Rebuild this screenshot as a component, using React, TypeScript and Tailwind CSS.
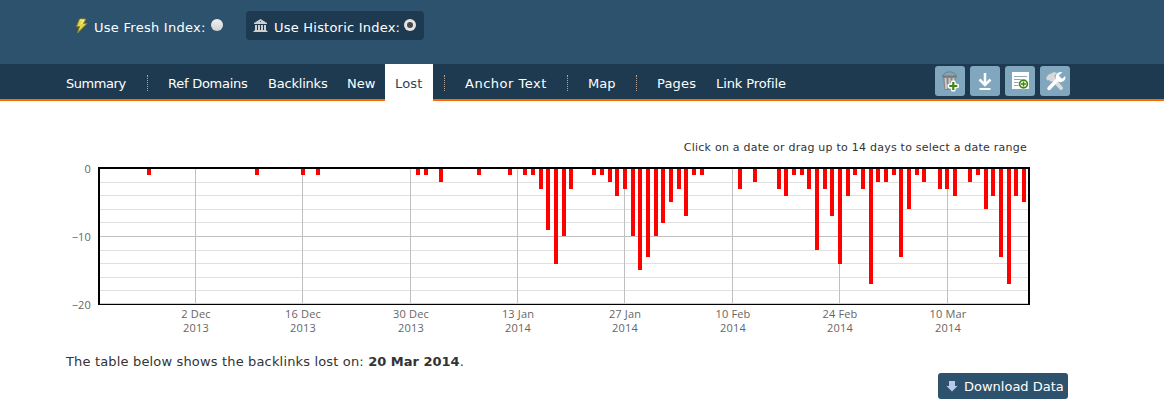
import React from 'react';

interface NavItem {
  label: string;
  className: string;
  active?: boolean;
}

const NAV_GROUPS: NavItem[][] = [
  [{ label: 'Summary', className: 'w-[60px] tracking-[-0.45px]' }],
  [
    { label: 'Ref Domains', className: 'w-[80px] tracking-[-0.25px]' },
    { label: 'Backlinks', className: 'w-[59px] tracking-[-0.2px]' },
    { label: 'New', className: 'w-[28px]' },
    { label: 'Lost', className: 'w-[28px] tracking-[0.2px]', active: true },
  ],
  [{ label: 'Anchor Text', className: 'w-[81px] tracking-[0.5px]' }],
  [{ label: 'Map', className: 'w-[27px]' }],
  [
    { label: 'Pages', className: 'w-[39px] tracking-[0.2px]' },
    { label: 'Link Profile', className: 'w-[70px] tracking-[-0.1px]' },
  ],
];

// [bar left edge, links lost that day]
const LOST: [number, number][] = [
  [147, 1], [255, 1], [301, 1], [316, 1], [416, 1], [424, 1], [439, 2], [477, 1],
  [508, 1], [523, 1], [531, 1], [539, 3], [546, 9], [554, 14], [562, 10], [569, 3],
  [592, 1], [600, 1], [608, 2], [615, 4], [623, 3], [631, 10], [638, 15], [646, 13],
  [654, 10], [661, 8], [669, 5], [677, 3], [684, 7], [692, 1], [700, 1], [738, 3],
  [753, 2], [777, 3], [784, 4], [792, 1], [800, 1], [807, 3], [815, 12], [823, 3],
  [830, 7], [838, 14], [846, 4], [853, 1], [861, 3], [869, 17], [876, 2], [884, 2],
  [892, 1], [899, 13], [907, 6], [915, 1], [922, 2], [938, 3], [945, 3], [953, 4],
  [968, 2], [976, 1], [984, 6], [991, 4], [999, 13], [1007, 17], [1014, 4], [1022, 5],
];

const MINOR_LINES = [182, 195, 209, 222, 250, 263, 277, 290];

const TICKS: [number, string, string][] = [
  [195, '2 Dec', '2013'],
  [302, '16 Dec', '2013'],
  [410, '30 Dec', '2013'],
  [517, '13 Jan', '2014'],
  [624, '27 Jan', '2014'],
  [732, '10 Feb', '2014'],
  [839, '24 Feb', '2014'],
  [947, '10 Mar', '2014'],
];

const barHeight = (value: number) => Math.ceil(168 + 6.8 * value) - 169;

const IndexSwitch: React.FC = () => (
  <div className="h-16 bg-[#2d526d] pl-[66px] pt-[11px] flex items-start gap-[15px] text-white">
    <label className="h-[29px] w-[165px] flex items-center pl-[9px]">
      <svg width="13" height="16" viewBox="0 0 13 16" className="mr-[6px]">
        <path d="M4.500 1h6.500L8.500 5.500H12L2.500 15l2-6.500H1.500z" fill="#e6d44c" stroke="#8d831f" strokeWidth="1" />
        <path d="M5 2h4L6 6" stroke="#fff7b0" fill="none" />
      </svg>
      <span className="w-[112px] whitespace-nowrap mt-[4px] tracking-[0.27px]">Use Fresh Index:</span>
      <span className="ml-[5px] -mt-[2px] size-[12px] shrink-0 rounded-full bg-linear-to-b from-[#f0f0f0] to-[#d2d2d2]" />
    </label>
    <label className="h-[29px] w-[178px] flex items-center rounded bg-[#1e3a50] pl-[7px]">
      <svg width="15" height="15" viewBox="0 0 15 15" className="mr-[6px]" fill="#d0d0d0">
        <path d="M7.500 1L14 5v1H1V5z" />
        <path d="M2 7h2v5H2zM5 7h2v5H5zM8 7h2v5H8zM11 7h2v5h-2zM1.500 12h12v1h-12zM.5 13h14v1H.5z" />
        <path d="M7 3h1v1H7z" fill="#555" />
      </svg>
      <span className="w-[125px] whitespace-nowrap mt-[4px] tracking-[0.22px]">Use Historic Index:</span>
      <span className="ml-[5px] -mt-[2px] size-[12px] shrink-0 rounded-full bg-[#e4e4e4] flex items-center justify-center">
        <span className="size-[6px] rounded-full bg-[#4a4a4a]" />
      </span>
    </label>
  </div>
);

const ToolButton: React.FC<{ children: React.ReactNode }> = ({ children }) => (
  <button className="size-[30px] rounded-[3px] bg-[#80a7bd] flex items-center justify-center">
    <svg width="30" height="30" viewBox="0 0 30 30" fill="none">
      {children}
    </svg>
  </button>
);

const Tools: React.FC = () => (
  <div className="ml-auto mr-[94px] mt-[2px] flex gap-[5px]">
    <ToolButton>
      <path d="M8 10C9 4.500 20 4.500 21 10" stroke="#6e7f88" strokeWidth="1" />
      <path d="M7 9.500h15v2H7z" fill="#7b7b7b" />
      <path d="M8 11h13l-1.500 13h-10z" fill="#858585" />
      <path d="M10.500 12l.7 11M14.500 12v11M18.500 12l-.7 11" stroke="#c9c9c9" strokeWidth="2" />
      <path d="M16.500 14.500h3.500l1 3 3 1v3l-3 1-1 3h-3.500l-1-3-3-1v-3l3-1z" fill="#fff" />
      <path d="M18.300 16v8M14.300 20h8" stroke="#3c8a12" strokeWidth="2.200" />
    </ToolButton>
    <ToolButton>
      <path d="M15 7v12M9.500 13.500l5.500 5.500 5.500-5.500" stroke="#fff" strokeWidth="2.500" />
      <path d="M9.500 22h11v2h-11z" fill="#fff" />
    </ToolButton>
    <ToolButton>
      <path d="M7 6h17v17H7z" fill="#fff" />
      <path d="M9 10.500h13M9 13.500h9M9 16.500h6M9 19.500h5" stroke="#8fabb9" />
      <circle cx="18.500" cy="18" r="5.200" fill="#fff" />
      <circle cx="18.500" cy="18" r="3.900" stroke="#3c8a12" strokeWidth="1.700" />
      <path d="M18.500 15.500v5M16 18h5" stroke="#3c8a12" strokeWidth="1.500" />
    </ToolButton>
    <ToolButton>
      <path d="M12.500 12.500l8.500 9.500" stroke="#dcdcdc" strokeWidth="4" strokeLinecap="round" />
      <path d="M6 12.500l2-3.500 6-3 3 1-2.500 2.500.5 2.500-4 4-2-2-1.500.5z" fill="#d8d8d8" />
      <path d="M9 22.500L19 12" stroke="#fff" strokeWidth="3.500" strokeLinecap="round" />
      <path d="M22.500 6.500a5 5 0 1 0 3 5.500l-.5-2-2.500 2.500-3-.5-.5-3z" fill="#fff" />
    </ToolButton>
  </div>
);

const NavBar: React.FC = () => (
  <nav className="h-[37px] bg-[#ff6a00]">
    <div className="h-[35px] bg-[#1e3a50] flex items-start text-white">
      <div className="ml-[56px] flex">
        {NAV_GROUPS.map((group, i) => (
          <div key={i} className="flex">
            {i > 0 && <span className="ml-[11px] mr-[10px] mt-[11px] h-[16px] w-0 border-l border-dotted border-[#b5a295]" />}
            {group.map((item) => (
              <a
                key={item.label}
                className={
                  item.active
                    ? 'h-[37px] bg-white px-[10px] pt-[10px] text-[#2d4358]'
                    : 'h-[35px] px-[10px] pt-[10px]'
                }
              >
                <span className={`block whitespace-nowrap ${item.className}`}>{item.label}</span>
              </a>
            ))}
          </div>
        ))}
      </div>
      <Tools />
    </div>
  </nav>
);

const LostChart: React.FC = () => (
  <svg
    width="984"
    height="178"
    viewBox="60 160 984 178"
    className="ml-[60px] block font-['Open_Sans','Noto_Sans',sans-serif] text-[11px] tracking-[0.15px]"
    shapeRendering="crispEdges"
  >
    {MINOR_LINES.map((y) => (
      <rect key={y} x="100" y={y} width="928" height="1" fill="#e0e0e0" />
    ))}
    <rect x="100" y="236" width="928" height="1" fill="#c0c0c0" />
    {TICKS.map(([x, day, year]) => (
      <g key={x} fill="#666" textAnchor="middle">
        <rect x={x} y="169" width="1" height="134" fill="#c0c0c0" />
        <text x={x + 1} y="318">{day}</text>
        <text x={x + 1} y="332">{year}</text>
      </g>
    ))}
    {LOST.map(([x, value]) => (
      <rect key={x} x={x} y="169" width="4" height={barHeight(value)} fill="#f00" />
    ))}
    <rect x="99" y="303" width="930" height="1" fill="#c0d0e0" />
    <path d="M98 167h932v138H98v-1h930V169H100v135h-2z" fill="#000" fillRule="evenodd" />
    <g fill="#666" textAnchor="end">
      <text x="91" y="173">0</text>
      <text x="91" y="241">−10</text>
      <text x="91" y="309">−20</text>
    </g>
  </svg>
);

export default function App() {
  return (
    <div className="h-[408px] overflow-hidden bg-white font-['DejaVu_Sans',Verdana,sans-serif] text-[13px] leading-[20px] text-[#333]">
      <IndexSwitch />
      <NavBar />
      <main>
        <p className="h-[59px] pt-[38px] pr-[137px] text-right text-[11px] leading-[18px] tracking-[0.235px]">
          Click on a date or drag up to 14 days to select a date range
        </p>
        <LostChart />
        <p className="ml-[66px] pt-[14px] h-[35px] tracking-[0.16px]">
          The table below shows the backlinks lost on: <b className="tracking-normal">20 Mar 2014</b>.
        </p>
        <button className="ml-[938px] h-[26px] w-[130px] rounded-[3px] bg-[#2d526d] flex items-center pl-[8px] text-white">
          <svg width="12" height="12" viewBox="0 0 12 12" className="mr-[6px]">
            <path d="M3 1h6v5h2.500L6 11.500.5 6H3z" fill="#b9c9ee" />
          </svg>
          <span className="mt-[2px] whitespace-nowrap">Download Data</span>
        </button>
      </main>
    </div>
  );
}
